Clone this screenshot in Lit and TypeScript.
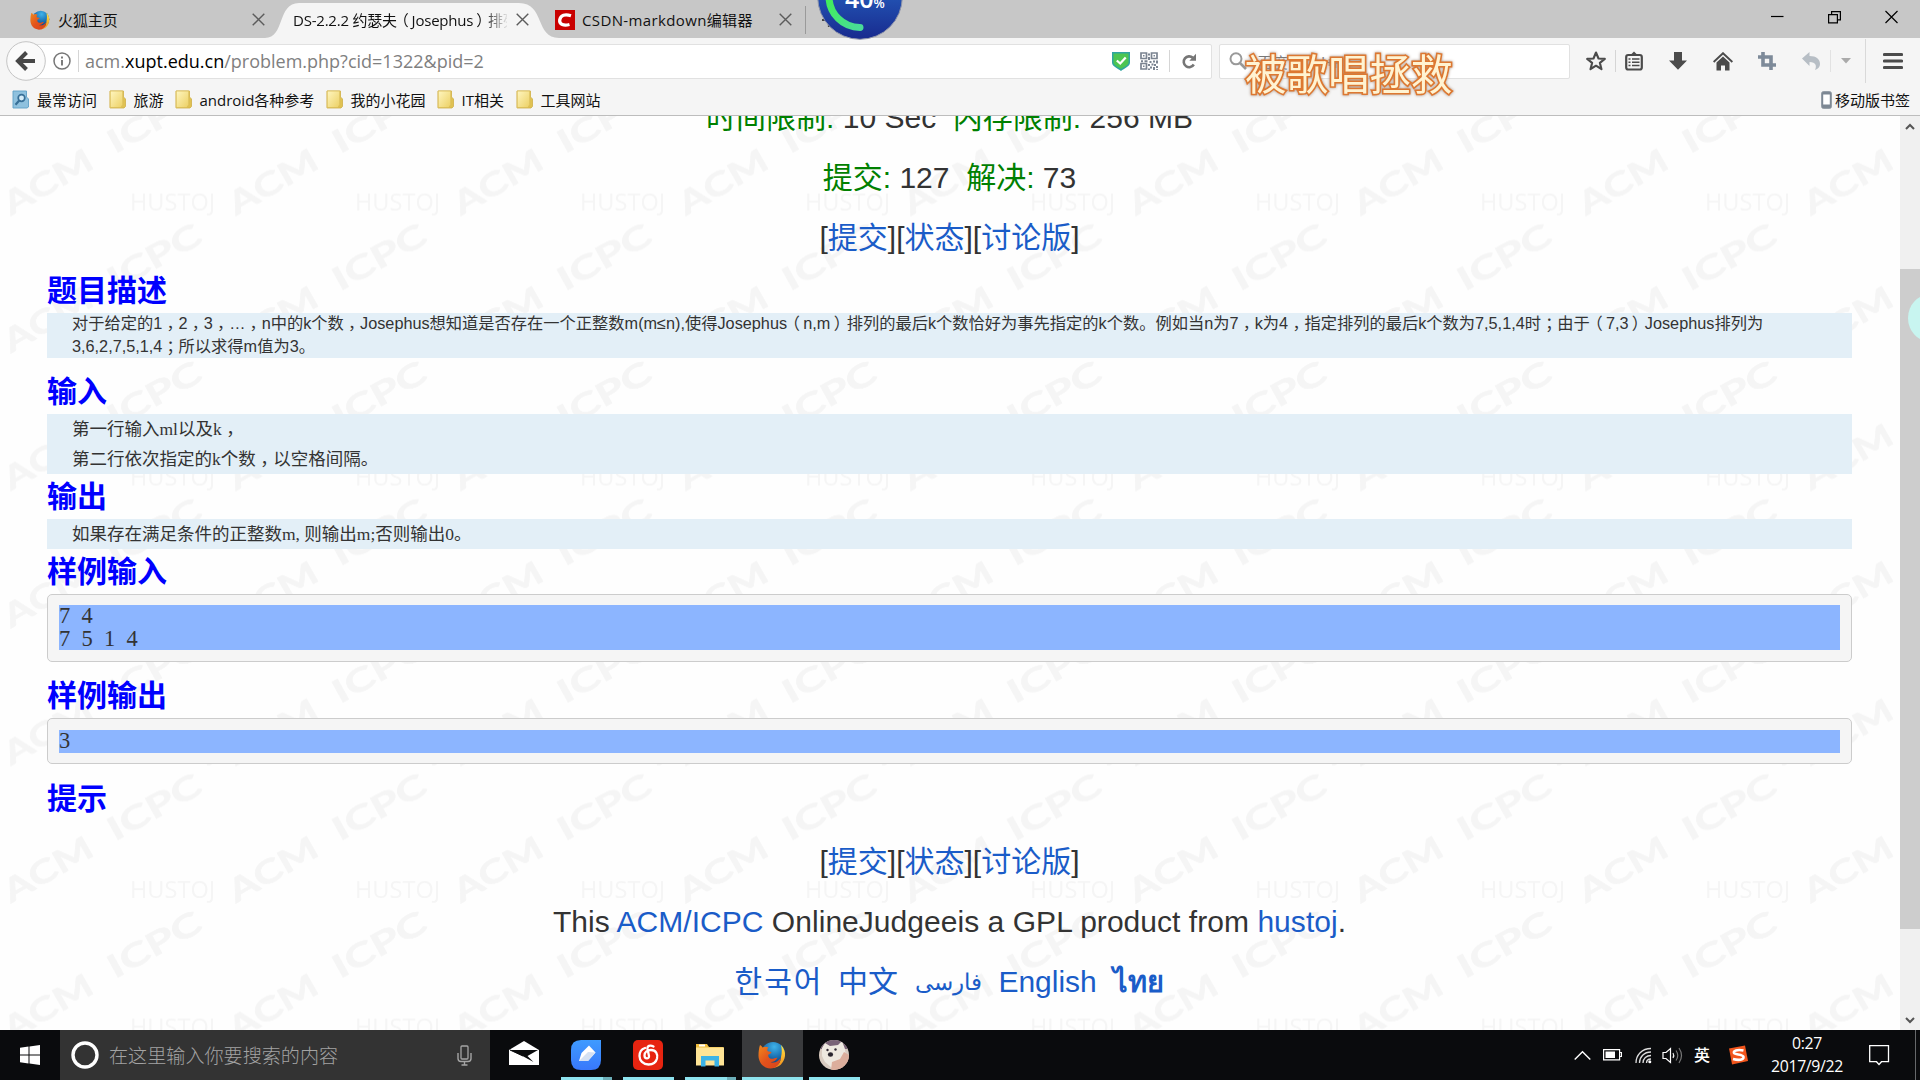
import { LitElement, html, css } from "lit";
import { customElement } from "lit/decorators.js";

const cross = html`<svg class="cross" width="13" height="13" viewBox="0 0 13 13"><path d="M.7 .7L12.3 12.3M12.3 .7L.7 12.3" stroke="#5c5c5c" stroke-width="1.4" fill="none"/></svg>`;

// Centres full-width commas, semicolons and brackets in their cells.
const cjk = (text: string) =>
  text.split(/([，；（）])/).map((part) =>
    part === "，" || part === "；" ? html`<span class="mid">${part}</span>`
    : part === "（" ? html`<span class="open">${part}</span>`
    : part === "）" ? html`<span class="close">${part}</span>`
    : part);

const punctuation = css`
  .mid, .open, .close { position: relative; }
  .mid { left: .26em; }
  .open { left: -.2em; }
  .close { left: .2em; }
`;

const firefox = (size: number) => html`<svg width=${size} height=${size} viewBox="0 0 28 28">
  <defs>
    <radialGradient id="fb" cx=".55" cy=".2" r=".8"><stop offset="0" stop-color="#3fb3ea"/><stop offset=".6" stop-color="#1768ab"/><stop offset="1" stop-color="#0c2a5c"/></radialGradient>
    <linearGradient id="fo" x1="0" y1="0" x2="1" y2="1"><stop offset="0" stop-color="#f08a1d"/><stop offset=".5" stop-color="#e2521c"/><stop offset="1" stop-color="#d8431a"/></linearGradient>
    <linearGradient id="fy" x1="0" y1="0" x2="0" y2="1"><stop offset="0" stop-color="#ffe443"/><stop offset="1" stop-color="#f28a1a"/></linearGradient>
  </defs>
  <circle cx="15" cy="13" r="12" fill="url(#fb)"/>
  <path d="M23 4c3 3 4.500 7 4 11-1 7-6 12-13 12 6-2 9-6 9-11 1-4 1-8 0-12z" fill="url(#fy)"/>
  <path d="M2 4c1 .5 2 1.500 2.500 2.500 2-1 4-1 6 0-1 1-1.500 2-1 3.500 1 .7 3 .5 4 1-.3 1.500-2 2-3 2.600-.8 2 .5 4 3 4.200 2.500.2 3.500-1.500 6-1-1.500 3-4.500 4.500-7 4.200 4 1.500 8-.5 10-4 0 6-4.500 10.500-10 10.500C5.500 27.500.5 21.500.5 14.500c0-4 .5-7.500 1.500-10.500z" fill="url(#fo)"/>
</svg>`;

const folder = html`<svg width="17" height="19" viewBox="0 0 17 19">
  <defs><linearGradient id="fd" x1="0" y1="0" x2="1" y2="1"><stop offset="0" stop-color="#fff6c0"/><stop offset="1" stop-color="#ecd063"/></linearGradient></defs>
  <path d="M1 1h13.500v6l2 2v7.500l-1.500 1.500H1z" fill="#e0c252" stroke="#cfae48" stroke-width=".8"/>
  <path d="M1.200 1h12.600v13.500L12 17.500H1.200z" fill="url(#fd)" stroke="#d9bd58" stroke-width=".8"/>
</svg>`;

const recent = html`<svg width="17" height="19" viewBox="0 0 17 19">
  <path d="M1 1h13.500v6l2 2v8l-1.500 1H1z" fill="#8fc1de" stroke="#5f9fc6" stroke-width=".9"/>
  <circle cx="9.500" cy="8" r="3.300" fill="#d5ecf8" stroke="#376f97" stroke-width="1.700"/>
  <path d="M7.200 10.500L3.500 14.700" stroke="#376f97" stroke-width="2.200"/>
</svg>`;

const bookmarks = [
  { icon: recent, label: "最常访问", width: 60.5 },
  { icon: folder, label: "旅游", width: 30 },
  { icon: folder, label: "android各种参考", width: 115 },
  { icon: folder, label: "我的小花园", width: 75 },
  { icon: folder, label: "IT相关", width: 43 },
  { icon: folder, label: "工具网站", width: 60 },
];

@customElement("browser-tabs")
class BrowserTabs extends LitElement {
  static styles = [punctuation, css`
    :host { display: flex; height: 38px; background: #c7c7c7; position: relative; font: 15px/40px "Open Sans", "Noto Sans CJK SC", sans-serif; color: #111; }
    .tab { display: flex; align-items: center; position: relative; height: 39px; box-sizing: border-box; white-space: nowrap; }
    .tab svg { flex: none; }
    .first { width: 265px; padding-left: 30px; }
    .first .title { margin-left: 8px; width: 198px; letter-spacing: -.1px; }
    .active { width: 294px; padding-left: 28px; }
    .shape { position: absolute; left: 0; top: 0; }
    .active .title { width: 214px; position: relative; overflow: hidden; margin-right: 9px; letter-spacing: -.22px;
      -webkit-mask-image: linear-gradient(90deg, #000 190px, transparent 216px); }
    .active .cross { position: relative; }
    .third { width: 246px; margin-left: -4px; }
    .third .title { width: 197px; margin-left: 7px; letter-spacing: .37px; }
    .plus { width: 1px; height: 28px; background: #9a9a9a; margin: 6px 16px 0 4px; }
    .add { margin-top: 13px; }
    .ball { position: absolute; left: 816px; top: 0; z-index: 3; }
    .controls { margin-left: auto; display: flex; padding-right: 22px; gap: 44px; padding-top: 10px; }
  `];
  render() {
    return html`
      <div class="tab first">${firefox(20)}<span class="title">火狐主页</span>${cross}</div>
      <div class="tab active">
        <svg class="shape" width="294" height="38"><path d="M0 38C20 38 12 3 34 3H254C280 3 270 38 294 38Z" fill="#f5f5f5"/></svg>
        <span class="title">${cjk("DS-2.2.2 约瑟夫（Josephus）排列")}</span>${cross}
      </div>
      <div class="tab third">
        <svg width="20" height="20" viewBox="0 0 20 20"><rect width="20" height="20" fill="#c90000"/><path d="M16 5.700C10 3.800 5.500 5 4.700 10c-.5 4.500 4 6 9.800 4.500" fill="none" stroke="#fff" stroke-width="3.300"/></svg>
        <span class="title">CSDN-markdown编辑器</span>${cross}
      </div>
      <div class="plus"></div>
      <svg class="add" width="14" height="14"><path d="M7 0v14M0 7h14" stroke="#444" stroke-width="2.200"/></svg>
      <svg class="ball" width="88" height="42" viewBox="0 0 88 42">
        <defs><linearGradient id="bg" x1="0" y1="0" x2="0" y2="1"><stop offset=".45" stop-color="#2355b5"/><stop offset="1" stop-color="#182a8e"/></linearGradient>
        <linearGradient id="gr" x1="0" y1="0" x2="1" y2="1"><stop offset="0" stop-color="#42ef58"/><stop offset="1" stop-color="#49dc98"/></linearGradient></defs>
        <circle cx="44" cy="-3" r="42.300" fill="url(#bg)" stroke="#8f95aa" stroke-width="1"/>
        <path d="M13-3A31 31 0 0 0 44 27.500" fill="none" stroke="url(#gr)" stroke-width="7" stroke-linecap="round"/>
        <text x="29" y="7.500" font-size="25" font-weight="600" font-family="Open Sans, sans-serif" fill="#fff">40<tspan font-size="13">%</tspan></text>
      </svg>
      <div class="controls">
        <svg width="13" height="14"><path d="M0 6.500h12.500" stroke="#000" stroke-width="1.200"/></svg>
        <svg width="13" height="14"><path d="M.6 4.600h8.800v8.200H.6zM3.600 4.500V1.600h8.800v8.200H9.500" fill="none" stroke="#000" stroke-width="1.200"/></svg>
        <svg width="13" height="14"><path d="M.5 1L12.500 13M12.500 1L.5 13" stroke="#000" stroke-width="1.200"/></svg>
      </div>`;
  }
}

@customElement("browser-toolbar")
class BrowserToolbar extends LitElement {
  static styles = css`
    :host { display: block; height: 78px; background: #f5f5f5; border-bottom: 1px solid #bdbdbd; box-sizing: border-box; position: relative;
      font-family: "Open Sans", "Noto Sans CJK SC", sans-serif; }
    svg { display: block; flex: none; }
    .nav { display: flex; height: 46px; align-items: center; box-sizing: border-box; padding-left: 24px; }
    .field { height: 35px; box-sizing: border-box; background: #fff; border: 1px solid #e1e1e1; display: flex; align-items: center; border-radius: 2px; }
    .url { width: 1188px; padding-left: 28px; }
    .back { position: absolute; left: 6px; top: 3px; }
    .rule { width: 1px; height: 22px; background: #d5d5d5; }
    .info { margin-right: 7px; }
    .address { font-size: 18px; line-height: 30px; color: #808080; margin-left: 6px; width: 1027px; letter-spacing: 0; white-space: nowrap; }
    .address b { font-weight: 400; color: #000; }
    .qr { margin: 0 11px 0 10px; }
    .reload { margin-left: 12px; }
    .search { width: 351px; margin-left: 7px; padding-left: 9px; font-size: 15px; color: #777; gap: 3px; }
    .tools { display: flex; align-items: center; height: 46px; margin-left: 15px; }
    .slot { display: flex; justify-content: center; width: 44.400px; }
    .tools .slot:first-child { width: 22px; }
    .s1 { margin: 0 7px 0 8px; }
    .slot.list { width: 24px; margin-right: 10px; margin-left: -1px; }
    .undo-rule { margin-left: -4px; opacity: .6; }
    .caret { margin-left: 10px; }
    .tail { width: 1px; height: 44px; background: #d9d9d9; margin: 0 17px 0 14px; }
    .marks { display: flex; height: 31px; align-items: center; padding: 0 0 0 12px; font-size: 15px; line-height: 30px; color: #111; }
    .mark { display: flex; align-items: center; gap: 8px; margin-right: 11px; white-space: nowrap; }
    .mobile { margin: 0 10px 0 auto; gap: 3px; }
    .lyric { position: absolute; left: 1245px; top: 3px; font: 400 41.500px/62px "Noto Sans CJK SC", sans-serif; color: #fff3d2; white-space: nowrap;
      -webkit-text-stroke: 3.200px #dd7831; paint-order: stroke fill; filter: drop-shadow(0 0 1.500px #a58c7c); }
  `;
  render() {
    const dark = "#4b4b4b";
    return html`
      <div class="nav">
        <div class="field url">
          <svg class="info" width="18" height="18"><circle cx="9" cy="9" r="8" fill="none" stroke="#767676" stroke-width="1.500"/><path d="M9 8v5.500M9 4.500v2" stroke="#767676" stroke-width="1.900"/></svg>
          <div class="rule"></div>
          <span class="address">acm.<b>xupt.edu.cn</b>/problem.php?cid=1322&amp;pid=2</span>
          <svg width="18" height="19" viewBox="0 0 18 19"><path d="M0 0h18v10.500c0 4-6 6-9 8.500-3-2.500-9-4.500-9-8.500z" fill="#2fa5a0"/><path d="M1.500 1.500h15v9c0 3-5 4.500-7.500 6.600C6.500 15 1.500 13.500 1.500 10.500z" fill="#4cc552"/><path d="M4.800 8.500l3.400 3 5.500-6" fill="none" stroke="#fff" stroke-width="2.300"/></svg>
          <svg class="qr" width="18" height="18" viewBox="0 0 18 18"><g fill="none" stroke="#7b8491" stroke-width="1.700"><path d="M1 1h5.500v5.500H1zM11.500 1H17v5.500h-5.500zM1 11.500h5.500V17H1z"/></g><path d="M3 3h1.500v1.500H3zM13.500 3H15v1.500h-1.500zM3 13.500h1.500V15H3zM8 1.500h2v2H8zM8 5h2v3H8zM1 8.200h2v2H1zM4.500 8.200h3v2h-3zM9.500 9h2v2h-2zM13 8.500h2v2h-2zM16 8.500h2v3h-2zM11.500 11.500h2v2h-2zM8 12h2v2H8zM14 12h2v2h-2zM10 14.500h2v2h-2zM13 15h2v3h-2zM16 14h2v2h-2zM8 16.500h2V18H8zM16.200 17H18v1h-1.800z" fill="#7b8491"/></svg>
          <div class="rule"></div>
          <svg class="reload" width="15" height="17" viewBox="0 0 15 17"><path d="M11.800 11.500A5.400 5.400 0 1 1 10.800 4.800" fill="none" stroke="#767676" stroke-width="2.600"/><path d="M14 .8v7H7.300z" fill="#767676"/></svg>
        </div>
        <div class="field search">
          <svg width="18" height="18"><circle cx="7" cy="6.800" r="5.500" fill="none" stroke="#999" stroke-width="2"/><path d="M11 11l6 6" stroke="#999" stroke-width="2.600"/></svg>
          <span>&nbsp; 百度 &lt;Ctrl+K&gt;</span>
        </div>
        <div class="tools">
          <div class="slot"><svg width="20" height="20" viewBox="0 0 20 20"><path d="M10 1.500l2.500 6 6.300.4-4.900 4 1.600 6.300L10 14.700l-5.500 3.500 1.600-6.300-4.900-4 6.300-.4z" fill="none" stroke="${dark}" stroke-width="2.100" stroke-linejoin="round"/></svg></div>
          <div class="rule s1"></div>
          <div class="slot list"><svg width="18" height="20" viewBox="0 0 18 20"><rect x="1.200" y="4" width="15.600" height="14.500" rx="2" fill="none" stroke="${dark}" stroke-width="2.200"/><path d="M5 4.500L9 .5l4 4z" fill="${dark}"/><path d="M3.500 8h2M7 8h7.500M3.500 11.300h2M7 11.300h7.500M3.500 14.600h2M7 14.600h7.500" stroke="${dark}" stroke-width="1.500"/></svg></div>
          <div class="slot"><svg width="18" height="18"><path d="M5 0h8v8.500h5L9 17.800 0 8.500h5z" fill="${dark}"/></svg></div>
          <div class="slot"><svg width="20" height="19" viewBox="0 0 20 19"><path d="M.6 10L10 1.200 19.400 10" fill="none" stroke="${dark}" stroke-width="1.900"/><path d="M10 4.500l6.500 6V18.500h-4.500v-5H8v5H3.500V10.500z" fill="${dark}"/></svg></div>
          <div class="slot"><svg width="18" height="18"><path d="M5 0v13h13M0 5h13v13" fill="none" stroke="#7d8a99" stroke-width="3.600"/></svg></div>
          <div class="slot"><svg width="19" height="18" viewBox="0 0 19 18"><path d="M0 6.500L7.500 0v4c7 0 10.500 3.500 10.500 8 0 3-2 5-5 6 2-4 1-8-5.500-8v4z" fill="#b7bec5"/></svg></div>
          <div class="rule undo-rule"></div>
          <svg class="caret" width="10" height="6"><path d="M0 0h10L5 5.500z" fill="#aaa"/></svg>
          <div class="tail"></div>
          <svg width="20" height="18"><path d="M1.500 2.500h17M1.500 9h17M1.500 15.500h17" stroke="${dark}" stroke-width="3.200" stroke-linecap="round"/></svg>
        </div>
      </div>
      <svg class="back" width="40" height="40"><circle cx="20" cy="20" r="19.300" fill="#fafafa" stroke="#c4c4c4"/><path d="M29 20H13M20.500 11.500L12 20l8.500 8.500" fill="none" stroke="#474747" stroke-width="4"/></svg>
      <div class="marks">
        ${bookmarks.map((b) => html`<div class="mark">${b.icon}<span style="width:${b.width}px">${b.label}</span></div>`)}
        <div class="mark mobile">
          <svg width="11" height="18"><rect x=".7" y=".7" width="9.600" height="16.600" rx="1.500" fill="#7c8793" stroke="#87919c"/><path d="M2.200 3.500h6.600v10H2.200z" fill="#fff"/></svg>
          <span>移动版书签</span>
        </div>
      </div>
      <div class="lyric">被歌唱拯救</div>`;
  }
}

@customElement("problem-page")
class ProblemPage extends LitElement {
  static styles = [punctuation, css`
    :host { display: flex; height: 914px; overflow: hidden; position: relative; background: #fefefe; color: #333; font-family: "Liberation Sans", "Noto Sans CJK SC", sans-serif; }
    .paper { position: absolute; left: 0; top: 0; }
    .body { position: relative; width: 1805px; padding: 0 48px 0 47px; margin-top: -28px; }
    .row { height: 60px; line-height: 60px; font-size: 30px; text-align: center; white-space: pre; }
    .row .g { color: #008000; }
    .row a { color: #1a5cc8; }
    .credit { letter-spacing: .04px; }
    .langs a { display: inline-block; height: 60px; vertical-align: top; }
    .langs .ko { letter-spacing: 2px; margin-right: -2px; }
    .langs .fa { font-size: 23px; }
    .langs .th { font-weight: 600; font-size: 29px; }
    h2 { margin: 0; height: 45px; font: 700 30px/40px "Noto Sans CJK SC", sans-serif; color: #0000fe; }
    .panel { background: #e3eff7; padding-left: 25px; overflow: hidden; white-space: pre; }
    .desc { font-size: 16.250px; line-height: 20.500px; height: 45px; margin-bottom: 11px; }
    .desc div { height: 22.500px; }
    .serif { font: 17.500px/30px "Liberation Serif", "Noto Sans CJK SC", serif; }
    .serif div { height: 30px; }
    pre { margin: 0; box-sizing: border-box; background: #f5f5f5; border: 1px solid #ccc; border-radius: 5px; padding: 10px 11px;
      font: 22.500px/22.500px "Liberation Serif", serif; word-spacing: 5.620px; }
    pre div { background: #8cb5ff; }
    .in { height: 68px; margin-bottom: 11px; }
    .out { height: 46px; margin: 0 0 12px; padding-top: 11px; }
    .gap { margin-bottom: 11px; }
    .bar { position: relative; width: 20px; background: #f0f0f0; display: flex; flex-direction: column; align-items: center; justify-content: space-between; padding: 7px 0 6px; box-sizing: border-box; }
    .thumb { width: 20px; height: 660px; background: #cdcdcd; margin: 0 0 -50px; }
    .bubble { position: absolute; right: -34px; top: 178px; width: 46px; height: 48px; border-radius: 50%; background: #c8f5f0; }
  `];
  render() {
    const links = html`[<a>提交</a>][<a>状态</a>][<a>讨论版</a>]`;
    return html`
      <svg class="paper" width="1900" height="914">
        <defs><pattern id="wm" width="225" height="137.500" patternUnits="userSpaceOnUse" y="-31">
          <g fill="#f5f5f5" stroke="#f5f5f5" stroke-width=".6" font-family="Lato, sans-serif">
            <text transform="translate(11 131) rotate(-30)" font-size="32" font-weight="700" textLength="98" lengthAdjust="spacingAndGlyphs">ACM</text>
            <text transform="translate(115 69) rotate(-29)" font-size="32" font-weight="700" textLength="102" lengthAdjust="spacingAndGlyphs">ICPC</text>
            <text x="130" y="126" font-size="23.500" stroke="none" font-family="Open Sans, sans-serif" textLength="85">HUSTOJ</text>
          </g></pattern></defs>
        <rect width="1900" height="914" fill="url(#wm)"/>
      </svg>
      <div class="body">
        <div class="row"><span class="g">时间限制: </span>10 Sec&nbsp; <span class="g">内存限制: </span>256 MB</div>
        <div class="row"><span class="g">提交: </span>127&nbsp; <span class="g">解决: </span>73</div>
        <div class="row">${links}</div>
        <h2>题目描述</h2>
        <div class="panel desc"><div>${cjk("对于给定的1，2，3，…，n中的k个数，Josephus想知道是否存在一个正整数m(m≤n),使得Josephus（n,m）排列的最后k个数恰好为事先指定的k个数。例如当n为7，k为4，指定排列的最后k个数为7,5,1,4时；由于（7,3）Josephus排列为")}</div><div>${cjk("3,6,2,7,5,1,4；所以求得m值为3。")}</div></div>
        <h2>输入</h2>
        <div class="panel serif"><div>${cjk("第一行输入ml以及k，")}</div><div>${cjk("第二行依次指定的k个数，以空格间隔。")}</div></div>
        <h2>输出</h2>
        <div class="panel serif"><div>如果存在满足条件的正整数m, 则输出m;否则输出0。</div></div>
        <h2>样例输入</h2>
        <pre class="in"><div>7 4
7 5 1 4</div></pre>
        <h2>样例输出</h2>
        <pre class="out"><div>3</div></pre>
        <h2 class="gap">提示</h2>
        <div class="row">${links}</div>
        <div class="row credit">This <a>ACM/ICPC</a> OnlineJudgeeis a GPL product from <a>hustoj</a>.</div>
        <div class="row langs"><a class="ko">한국어</a>&nbsp; <a>中文</a>&nbsp; <a class="fa">فارسی</a>&nbsp; <a>English</a>&nbsp; <a class="th">ไทย</a></div>
      </div>
      <div class="bar">
        <svg width="10" height="7"><path d="M1 6l4-4 4 4" fill="none" stroke="#555" stroke-width="2"/></svg>
        <div class="thumb"></div>
        <svg width="10" height="7"><path d="M1 1l4 4 4-4" fill="none" stroke="#555" stroke-width="2"/></svg>
        <div class="bubble"></div>
      </div>`;
  }
}

@customElement("task-bar")
class TaskBar extends LitElement {
  static styles = css`
    :host { display: flex; height: 50px; background: #0a0b0d; color: #fff; font-family: "Open Sans", "Noto Sans CJK SC", sans-serif; }
    svg { display: block; flex: none; }
    .start { width: 60px; display: flex; align-items: center; justify-content: center; }
    .search { width: 430px; box-sizing: border-box; background: #333; display: flex; align-items: center; padding: 0 18px 0 11px; color: #a3a3a3; font: 300 19.100px/48px "Noto Sans CJK SC", sans-serif; }
    .search span { flex: 1; margin-left: 10px; }
    .app { width: 51px; margin-right: 11px; height: 50px; position: relative; box-sizing: border-box; display: flex; align-items: center; justify-content: center; border-bottom: 3px solid #8ee3ee; padding: 3px 2px 0 0; }
    .mail { border-color: transparent; width: 60px; margin: 0 5px 0 6px; padding: 0 5px 0 0; }
    .multi { border-image: linear-gradient(90deg, #8ee3ee 40px, #6cafb8 40px) 3; }
    .current { width: 61px; margin: 0 6px 0 -5px; background: #3a3b3d; }
    .tray { display: flex; align-items: center; margin-left: auto; }
    .battery { margin-left: 12px; }
    .wifi { margin-left: 13px; }
    .volume { margin-left: 10px; }
    .lang { font-size: 16px; font-weight: 500; line-height: 48px; margin: 0 18px 0 10px; }
    .clock { width: 80px; margin: 0 22px 0 19px; text-align: center; font-size: 15.800px; line-height: 23px; letter-spacing: -.3px; white-space: nowrap; }
    .show { width: 1px; height: 50px; background: #66686a; margin: 0 4px 0 25px; }
  `;
  render() {
    return html`
      <div class="start"><svg width="20" height="20"><path d="M0 2.800l8.500-1.200v8H0zM9.500 1.500L20 0v9.600H9.500zM0 10.500h8.500v8L0 17.200zM9.500 10.500H20V20L9.500 18.600z" fill="#fff"/></svg></div>
      <div class="search">
        <svg width="28" height="28"><circle cx="14" cy="14" r="12" fill="none" stroke="#fff" stroke-width="3.400"/></svg>
        <span>在这里输入你要搜索的内容</span>
        <svg width="15" height="21" viewBox="0 0 15 21"><rect x="4" y="1" width="7" height="13" rx="1" fill="none" stroke="#a5a5a5" stroke-width="1.300"/><path d="M1 8v5.500q0 3 3 3h7q3 0 3-3V8M7.500 16.500V20M4.500 20h6" fill="none" stroke="#a5a5a5" stroke-width="1.400"/></svg>
      </div>
      <div class="app mail"><svg width="30" height="25" viewBox="0 0 30 25"><path d="M0 9L15 0l15 9v15H0z" fill="#fff"/><path d="M1 9h28L18.500 15l6 6-11-6z" fill="#0a0b0d"/><path d="M1 9l13 6" stroke="#0a0b0d"/></svg></div>
      <div class="app multi"><svg width="30" height="30"><defs><linearGradient id="bl" x1="0" y1="0" x2="0" y2="1"><stop offset="0" stop-color="#3f9bff"/><stop offset="1" stop-color="#3878fb"/></linearGradient></defs><path d="M10 0H30V20Q30 30 20 30H10Q0 30 0 20V10Q0 0 10 0z" fill="url(#bl)"/><path d="M8 21L10.500 13 18 5.500 24.500 12.500 17 21z" fill="#fff"/><path d="M8 21l9-9 7.500.5L17 21z" fill="#d5e1f3"/></svg></div>
      <div class="app"><svg width="30" height="30"><rect width="30" height="30" rx="5" fill="#e72410"/><path d="M20.500 6.500C17 4.500 14 6 14.500 9l1.500 7c.5 3-4.500 3.500-4.500-.5 0-3.500 3-5.500 6.500-5.500 5 0 7 4 6 8.500-1 4-4.500 6-8.500 6-5.500 0-9-4-9-8.500 0-4 2.500-7 5.500-8" fill="none" stroke="#fff" stroke-width="2.300" stroke-linecap="round"/></svg></div>
      <div class="app multi"><svg width="28" height="24" viewBox="0 0 28 24"><path d="M0 1h11l2 3h14.500v18H0z" fill="#f0bd3d"/><path d="M0 4.500h28V22.500H0z" fill="#ffe596"/><path d="M3 1.500h6v2H3z" fill="#fff"/><path d="M5 23.500V13h18v10.500h-4.500v-6h-9v6z" fill="#3cb4e7"/></svg></div>
      <div class="app current">${firefox(28)}</div>
      <div class="app"><svg width="30" height="30"><defs><clipPath id="dc"><circle cx="15" cy="15" r="15"/></clipPath></defs><g clip-path="url(#dc)"><rect width="30" height="30" fill="#d9cbc0"/><path d="M0 0h30v9H0z" fill="#796276"/><path d="M3 8l3-5 5 3 8-1 4-4 3 8 1 10-5 7-9 2-7-6-3-6z" fill="#eee8df"/><path d="M13 22l8-3 4-7 5 3v15H12z" fill="#dcae9c"/><circle cx="8.500" cy="10" r="1.200" fill="#352c36"/><circle cx="16.500" cy="9.500" r="1.200" fill="#352c36"/><ellipse cx="11.500" cy="14.500" rx="2.600" ry="2.200" fill="#29242d"/></g></svg></div>
      <div class="tray">
        <svg width="17" height="11"><path d="M.7 9.500L8.500 1.700l7.800 7.800" fill="none" stroke="#fff" stroke-width="1.400"/></svg>
        <svg class="battery" width="19" height="12"><path d="M.6.600h16v10.300H.600zM16.500 3.500H18.500v4h-2" fill="none" stroke="#fff" stroke-width="1.200"/><path d="M2.500 2.500h9.500v6.500H2.500z" fill="#fff"/></svg>
        <svg class="wifi" width="17" height="17" viewBox="0 0 17 17"><g fill="none" stroke="#ddd" stroke-width="1.300"><path d="M1 16C1 8 7 1.500 16 1.500"/><path d="M4.500 16C4.500 10 9 5 16 5"/><path d="M8 16c0-4.500 3.500-7.500 8-7.500"/><path d="M11.500 16c0-2.500 2-4 4.500-4"/></g><circle cx="14.800" cy="14.800" r="1.500" fill="#fff"/></svg>
        <svg class="volume" width="22" height="17" viewBox="0 0 22 17"><path d="M1 5.500h3L8.500 1.500v14L4 11.500H1z" fill="none" stroke="#fff" stroke-width="1.200"/><path d="M11 6q1.500 2.500 0 5" fill="none" stroke="#eee" stroke-width="1.200"/><path d="M14 3.500q3.500 5 0 10M17 1q5 7.500 0 15" fill="none" stroke="#777" stroke-width="1.200"/></svg>
        <span class="lang">英</span>
        <svg width="20" height="20"><path d="M1 3.500L17 .5 20 16 4 19.500z" fill="#f2561d"/><path d="M15.500 5.500C9 4 5 6 6 8s9 1 9.500 4-5 3.500-10.500 2" fill="none" stroke="#fff" stroke-width="2.600"/></svg>
        <div class="clock">0:27<br>2017/9/22</div>
        <svg width="21" height="21"><path d="M.7.700h18.800v16h-7l-2.500 2.800-2.500-2.800H.700z" fill="none" stroke="#fff" stroke-width="1.300"/></svg>
        <div class="show"></div>
      </div>`;
  }
}

@customElement("app-root")
class AppRoot extends LitElement {
  static styles = css`
    :host { display: block; width: 1920px; height: 1080px; overflow: hidden; }
  `;
  render() {
    return html`<browser-tabs></browser-tabs><browser-toolbar></browser-toolbar><problem-page></problem-page><task-bar></task-bar>`;
  }
}
